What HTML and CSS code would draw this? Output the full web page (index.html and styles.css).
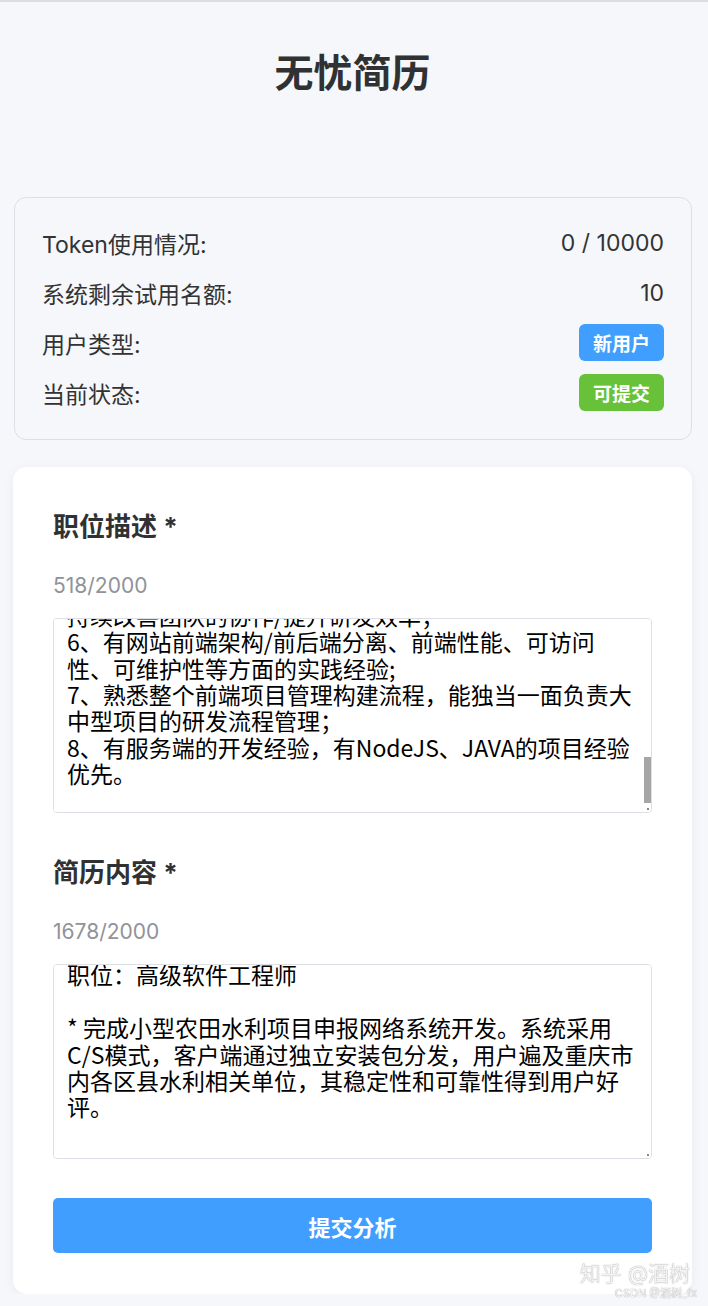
FILE: index.html
```html
<!DOCTYPE html>
<html lang="zh-CN">
<head>
    <meta charset="UTF-8">
    <meta name="viewport" content="width=device-width, initial-scale=1.0">
    <title>无忧简历</title>
    <link rel="stylesheet" href="styles.css">
</head>
<body>
    <div class="page">
        <header class="title">无忧简历</header>

        <section class="stats">
            <div class="stat-row">
                <span>Token使用情况:</span>
                <span>0 / 10000</span>
            </div>
            <div class="stat-row">
                <span>系统剩余试用名额:</span>
                <span>10</span>
            </div>
            <div class="stat-row">
                <span>用户类型:</span>
                <span class="tag tag-blue">新用户</span>
            </div>
            <div class="stat-row">
                <span>当前状态:</span>
                <span class="tag tag-green">可提交</span>
            </div>
        </section>

        <section class="form-card">
            <div class="field">
                <h3 class="field-label">职位描述 *</h3>
                <div class="counter">518/2000</div>
                <div class="input-wrap">
                    <textarea id="jd" class="text-input">岗位职责：
1、负责公司Web前端产品的架构设计与核心功能开发，保证产品的质量和开发效率；
2、与产品、设计、后端团队紧密协作，参与需求评审和技术方案设计；
3、持续优化前端页面性能和用户体验，解决各类浏览器兼容性问题；
4、负责前端基础组件库和工程化工具的建设与维护；
5、指导初级工程师的日常开发工作，开展代码评审；

任职要求：
1、本科及以上学历，计算机相关专业，5年以上前端开发经验；
2、精通HTML5、CSS3、JavaScript/TypeScript，熟悉ES6+规范；
3、精通Vue或React框架，熟悉其原理和生态；
4、熟悉Webpack、Vite等构建工具，有工程化实践经验；
5、具有良好的沟通能力和团队合作精神，能够通过工具持续改善团队的协作/提升研发效率；
6、有网站前端架构/前后端分离、前端性能、可访问性、可维护性等方面的实践经验;
7、熟悉整个前端项目管理构建流程，能独当一面负责大中型项目的研发流程管理；
8、有服务端的开发经验，有NodeJS、JAVA的项目经验优先。
</textarea>
                    <div class="scroll-thumb"></div>
                </div>
            </div>

            <div class="field">
                <h3 class="field-label">简历内容 *</h3>
                <div class="counter">1678/2000</div>
                <div class="input-wrap">
                    <textarea id="resume" class="text-input">个人信息
姓名：张先生
性别：男
年龄：32岁
学历：本科
专业：计算机科学与技术
工作年限：8年
电话：138****6721
邮箱：zhang@example.com

工作经历
2016.07 - 至今
公司：重庆某信息技术有限公司
职位：高级软件工程师

* 完成小型农田水利项目申报网络系统开发。系统采用C/S模式，客户端通过独立安装包分发，用户遍及重庆市内各区县水利相关单位，其稳定性和可靠性得到用户好评。


* 参与智慧水务管理平台的前端架构设计，基于Vue实现数据可视化大屏和多级权限管理。
* 负责团队前端工程化建设，搭建组件库和自动化构建发布流程。
</textarea>
                </div>
            </div>

            <button type="button" class="submit-btn">提交分析</button>
        </section>
    </div>

    <div class="watermark">
        <div class="wm-big">知乎 @酒树</div>
        <div class="wm-small">CSDN @酒树_fx</div>
    </div>

    <script>
        let jd = document.getElementById("jd");
        jd.scrollTop = jd.scrollHeight - jd.clientHeight - 9;

        // preceding lines are short, so each one is a single visual line
        let resume = document.getElementById("resume");
        let before = resume.value.slice(0, resume.value.indexOf("职位：高级")).split("\n").length - 1;
        resume.scrollTop = 8 + before * 26.4 + 4;
    </script>
</body>
</html>
```

FILE: styles.css
```css
body {
    margin: 0;
    background: #f5f7fa;
    border-top: 2px solid #dcdde1;
    font-family: 'Inter', 'Noto Sans CJK SC', sans-serif;
    color: #303133;
}
.page {
    padding: 0 16px 0 13px;
}
.title {
    padding: 46px 0 99px;
    text-align: center;
    font-size: 39px;
    line-height: 50px;
    font-weight: bold;
    color: #303133;
}
.stats {
    margin: 0 0 27px 1px;
    padding: 26px 27px 28px;
    border: 1px solid #dcdfe6;
    border-radius: 12px;
    background: #f5f7fa;
    display: flex;
    flex-direction: column;
    gap: 13px;
    font-size: 23px;
    color: #333;
}
.stat-row {
    display: flex;
    justify-content: space-between;
    align-items: center;
    min-height: 37px;
}
.tag {
    height: 37px;
    padding: 0 14px;
    border-radius: 6px;
    color: white;
    font-size: 19px;
    font-weight: bold;
    display: flex;
    align-items: center;
}
.tag-blue {
    background-color: #409eff;
}
.tag-green {
    background-color: #67c23a;
}
.form-card {
    background: white;
    border-radius: 14px;
    padding: 43px 40px 41px;
    box-shadow: 0 2px 12px rgba(0, 0, 0, 0.05);
}
.field {
    margin-bottom: 43px;
}
.field + .field {
    margin-bottom: 39px;
}
.field-label {
    margin: 0 0 28px;
    font-size: 26px;
    line-height: 34px;
    font-weight: bold;
    color: #303133;
}
.counter {
    margin-bottom: 18px;
    font-size: 21px;
    line-height: 28px;
    color: #909399;
}
.input-wrap {
    position: relative;
}
.input-wrap::after {
    content: "";
    position: absolute;
    right: 3px;
    bottom: 3px;
    width: 2px;
    height: 2px;
    background: #888;
}
.text-input {
    display: block;
    width: 100%;
    height: 195px;
    box-sizing: border-box;
    border: 1px solid #dcdfe6;
    border-radius: 4px;
    padding: 8px 17px 8px 13px;
    font-family: 'Noto Sans CJK SC', sans-serif;
    font-size: 23px;
    line-height: 26.4px;
    color: #000;
    background: white;
    resize: none;
    outline: none;
}
.scroll-thumb {
    position: absolute;
    right: 1px;
    top: 139px;
    width: 7px;
    height: 46px;
    background: #a6a6a6;
}
.submit-btn {
    display: block;
    width: 100%;
    height: 55px;
    border: none;
    border-radius: 5px;
    background-color: #409eff;
    color: white;
    font-family: 'Inter', 'Noto Sans CJK SC', sans-serif;
    font-size: 22px;
    font-weight: bold;
    cursor: pointer;
}
.watermark {
    position: fixed;
    right: 11px;
    bottom: 6px;
    text-align: right;
    color: rgba(255, 255, 255, 0.9);
    text-shadow: 0 0 1px rgba(0, 0, 0, 0.55);
}
.wm-big {
    font-size: 21px;
    line-height: 26px;
    margin-right: 7px;
}
.wm-small {
    font-size: 11px;
    line-height: 13px;
}
```
